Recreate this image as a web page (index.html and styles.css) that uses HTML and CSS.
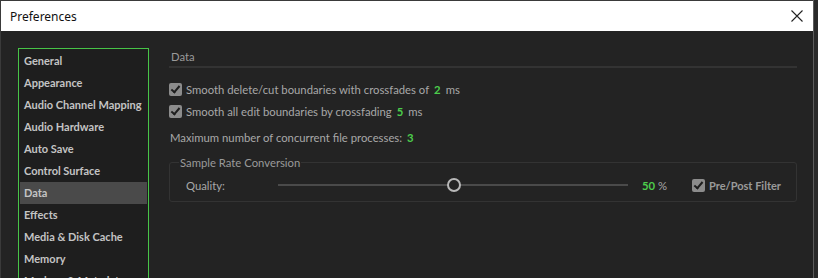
FILE: index.html
```html
<!DOCTYPE html>
<html lang="en">
<head>
<meta charset="UTF-8" />
<title>Preferences</title>
<link rel="stylesheet" href="styles.css">
</head>
<body>
  <div class="window">
    <div class="main">
      <div class="titlebar">
        <span class="title">Preferences</span>
        <svg class="close" width="12" height="12" viewBox="0 0 12 12">
          <path d="M0.5 0.5 L11.5 11.5 M11.5 0.5 L0.5 11.5" stroke="#222" stroke-width="1.1" fill="none" />
        </svg>
      </div>
      <div class="content">
        <ul class="nav">
          <li>General</li>
          <li>Appearance</li>
          <li>Audio Channel Mapping</li>
          <li>Audio Hardware</li>
          <li>Auto Save</li>
          <li>Control Surface</li>
          <li class="active">Data</li>
          <li>Effects</li>
          <li>Media &amp; Disk Cache</li>
          <li>Memory</li>
          <li>Markers &amp; Metadata</li>
        </ul>

        <div class="panel">
          <div class="panel-head">Data</div>

          <label class="row">
            <span class="check"></span><span>Smooth delete/cut boundaries with crossfades of</span><span class="val">2</span><span>ms</span>
          </label>
          <label class="row">
            <span class="check"></span><span>Smooth all edit boundaries by crossfading</span><span class="val">5</span><span>ms</span>
          </label>
          <div class="row plain">
            <span>Maximum number of concurrent file processes:</span><span class="val">3</span>
          </div>

          <fieldset class="group">
            <legend>Sample Rate Conversion</legend>
            <div class="quality">
              <span class="q-label">Quality:</span>
              <div class="slider">
                <span class="thumb"></span>
              </div>
              <span class="pct"><span class="val">50</span>%</span>
              <label class="filter">
                <span class="check"></span><span>Pre/Post Filter</span>
              </label>
            </div>
          </fieldset>
        </div>
      </div>
    </div>
    <div class="edge"></div>
  </div>
</body>
</html>
```

FILE: styles.css
```css
body {
  margin: 0;
  background: #2a2a2a;
  font-family: Lato, "Liberation Sans", Arial, sans-serif;
}

.window {
  width: 818px;
  height: 278px;
  display: flex;
  overflow: hidden;
  background: #2a2a2a;
}

.main {
  width: 812px;
  border-top: 1px solid #3a3a3a;
  border-left: 1px solid #3a3a3a;
  display: flex;
  flex-direction: column;
  background: #232323;
  overflow: hidden;
}

.edge {
  width: 1px;
  background: #5c5c5c;
}

.titlebar {
  flex-shrink: 0;
  height: 30px;
  background: #fff;
  display: flex;
  align-items: center;
  justify-content: space-between;
  padding: 0 10px 0 9px;
}

.title {
  font-size: 12px;
  color: #111;
  font-family: "Noto Sans", "Liberation Sans", sans-serif;
}

.content {
  flex: 1;
  display: flex;
  padding: 17px 0 0 17px;
  gap: 20px;
}

.nav {
  flex-shrink: 0;
  list-style: none;
  margin: 0;
  padding: 1px;
  width: 127px;
  border: 1px solid #47c447;
  border-bottom: none;
  background: #1e1e1e;
}

.nav li {
  height: 22px;
  line-height: 22px;
  padding-left: 4px;
  font-size: 11px;
  font-weight: bold;
  color: #c4c4c4;
  white-space: nowrap;
}

.nav li.active {
  background: #4a4a4a;
}

.panel {
  width: 628px;
  padding-top: 1px;
}

.panel-head {
  font-size: 11.3px;
  color: #9a9a9a;
  padding: 1px 0 3px 2px;
  border-bottom: 2px solid #333;
  margin-bottom: 10px;
}

.row {
  display: flex;
  align-items: center;
  height: 22px;
  font-size: 11.3px;
  color: #a8a8a8;
  white-space: nowrap;
}

.row.plain {
  padding-left: 1px;
  margin-top: 4px;
}

.val {
  color: #4ccd4c;
  font-weight: bold;
  padding: 0 5px;
}

.check {
  width: 13px;
  height: 13px;
  border-radius: 2px;
  background: #8c8c8c;
  margin-right: 4px;
  position: relative;
  flex-shrink: 0;
}

.check::after {
  content: "";
  position: absolute;
  left: 4px;
  top: 1px;
  width: 3px;
  height: 7px;
  border: solid #1e1e1e;
  border-width: 0 2px 2px 0;
  transform: rotate(40deg);
}

.group {
  margin: 8px 0 0;
  padding: 6px 0 6px 16px;
  border: 1px solid #333;
  border-radius: 3px;
}

.group legend {
  font-size: 11.3px;
  color: #9a9a9a;
  padding: 0 1px;
  margin-left: -7px;
}

.quality {
  display: flex;
  align-items: center;
  height: 20px;
  font-size: 11.3px;
  color: #a8a8a8;
}

.q-label {
  width: 92px;
}

.slider {
  width: 350px;
  height: 2px;
  background: #4a4a4a;
  position: relative;
}

.thumb {
  position: absolute;
  left: 169px;
  top: -6px;
  width: 10px;
  height: 10px;
  border: 2px solid #b8b8b8;
  border-radius: 50%;
  background: #232323;
}

.pct {
  margin-left: 14px;
  width: 50px;
}

.pct .val {
  padding: 0 3px 0 0;
}

.filter {
  display: flex;
  align-items: center;
  font-size: 11px;
  font-weight: bold;
  color: #9a9a9a;
}
```
